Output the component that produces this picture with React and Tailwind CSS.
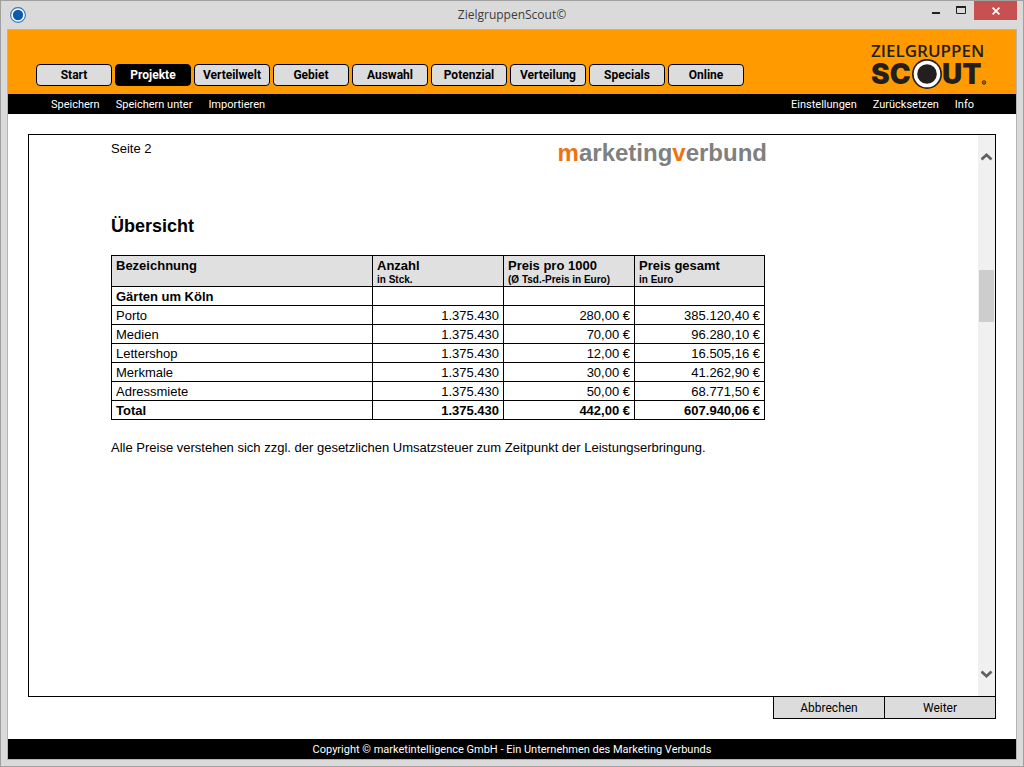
const tabs = [
  'Start',
  'Projekte',
  'Verteilwelt',
  'Gebiet',
  'Auswahl',
  'Potenzial',
  'Verteilung',
  'Specials',
  'Online',
];

const rows = [
  ['Porto', '1.375.430', '280,00 €', '385.120,40 €'],
  ['Medien', '1.375.430', '70,00 €', '96.280,10 €'],
  ['Lettershop', '1.375.430', '12,00 €', '16.505,16 €'],
  ['Merkmale', '1.375.430', '30,00 €', '41.262,90 €'],
  ['Adressmiete', '1.375.430', '50,00 €', '68.771,50 €'],
];

const columns = [
  ['Bezeichnung', ''],
  ['Anzahl', 'in Stck.'],
  ['Preis pro 1000', '(Ø Tsd.-Preis in Euro)'],
  ['Preis gesamt', 'in Euro'],
];

function TitleBar() {
  return (
    <header className="grid h-7 grid-cols-[1fr_auto_1fr] items-start">
      <svg className="mt-1 ml-2 size-5" viewBox="0 0 20 20" aria-hidden="true">
        <circle cx="9" cy="10" r="7.4" fill="#fff" stroke="#2f74b8" strokeWidth="1.1" />
        <circle cx="9" cy="10" r="5.2" fill="#0b5cad" />
      </svg>
      <h1 className="pt-1 font-['Open_Sans',sans-serif] text-xs leading-5 text-[#3c3c3c]">
        ZielgruppenScout©
      </h1>
      <div className="flex justify-end pr-1.5">
        <button type="button" aria-label="Minimieren" className="flex h-5 w-6 justify-center">
          <svg className="h-5 w-4" viewBox="0 0 16 20">
            <rect x="6" y="11" width="8" height="2" fill="#222" />
          </svg>
        </button>
        <button type="button" aria-label="Maximieren" className="flex h-5 w-7 justify-center">
          <svg className="h-5 w-4" viewBox="0 0 16 20">
            <path d="M4.500 12.500V6h9v6.500z" fill="none" stroke="#222" />
            <path d="M4 6h10" stroke="#222" strokeWidth="2" />
          </svg>
        </button>
        <button
          type="button"
          aria-label="Schließen"
          className="flex h-[19px] w-[43px] items-center justify-center bg-[#c75050]"
        >
          <svg className="size-2" viewBox="0 0 8 8">
            <path d="M.6.6l6.800 6.800M7.400.6L.6 7.400" stroke="#fff" strokeWidth="1.700" />
          </svg>
        </button>
      </div>
    </header>
  );
}

function Logo() {
  return (
    <svg className="h-[50px] w-[118px] overflow-visible" viewBox="0 0 118 50" role="img" aria-label="Zielgruppen Scout">
      <g fill="#231f20">
        <text x="2" y="17" className="font-['Open_Sans',sans-serif] text-[17px] font-semibold">
          ZIELGRUPPEN
        </text>
        <text x="2" y="44" className="font-[Inter,sans-serif] text-[28px] font-black">
          SC
        </text>
        <text x="73" y="44" className="font-[Inter,sans-serif] text-[28px] font-black">
          UT
        </text>
        <circle cx="58" cy="34" r="15" />
        <circle cx="58" cy="34" r="13.300" fill="#fff" />
        <circle cx="58" cy="34" r="9.800" />
      </g>
      <circle cx="115" cy="42.500" r="1.700" fill="none" stroke="#231f20" strokeWidth="1" />
      <circle cx="115" cy="42.500" r=".6" fill="#231f20" />
    </svg>
  );
}

function MenuLink({ children }) {
  return (
    <a href="#" className="hover:underline">
      {children}
    </a>
  );
}

function ScrollBar() {
  return (
    <div className="flex w-[17px] shrink-0 flex-col bg-[#f0f0f0] pt-3 pb-3">
      <button type="button" aria-label="Nach oben" className="flex h-5 items-center justify-center">
        <svg className="h-2.5 w-3" viewBox="0 0 12 10">
          <path d="M.5 7.500L5.500 2.800l5 4.700" fill="none" stroke="#606060" strokeWidth="2.800" />
        </svg>
      </button>
      <div className="flex grow flex-col px-px">
        <div className="basis-[103px]" />
        <div className="h-[52px] bg-[#cdcdcd]" />
      </div>
      <button type="button" aria-label="Nach unten" className="flex h-5 items-center justify-center">
        <svg className="h-2.5 w-3" viewBox="0 0 12 10">
          <path d="M.5 2.500l5 4.700 5-4.700" fill="none" stroke="#606060" strokeWidth="2.800" />
        </svg>
      </button>
    </div>
  );
}

function PriceTable() {
  return (
    <table className="w-full table-fixed border-collapse text-[13px] leading-[17px] [&_td]:border [&_td]:border-black [&_td]:px-1 [&_td]:pt-px [&_th]:border [&_th]:border-black [&_th]:px-1 [&_th]:pt-px">
      <colgroup>
        <col />
        <col className="w-[131px]" />
        <col className="w-[131px]" />
        <col className="w-[130px]" />
      </colgroup>
      <thead>
        <tr className="h-[31px] bg-[#e0e0e0] text-left">
          {columns.map(([title, unit]) => (
            <th key={title} scope="col" className="align-top">
              <span className="block pt-px leading-4">{title}</span>
              <span className="block text-[10px] leading-3">{unit}</span>
            </th>
          ))}
        </tr>
      </thead>
      <tbody>
        <tr>
          <th scope="row" className="text-left">
            Gärten um Köln
          </th>
          <td />
          <td />
          <td />
        </tr>
        {rows.map(([name, ...values]) => (
          <tr key={name}>
            <td>{name}</td>
            {values.map((value, i) => (
              <td key={i} className="text-right">
                {value}
              </td>
            ))}
          </tr>
        ))}
        <tr className="text-right font-bold">
          <th scope="row" className="text-left">
            Total
          </th>
          <td>1.375.430</td>
          <td>442,00 €</td>
          <td>607.940,06 €</td>
        </tr>
      </tbody>
    </table>
  );
}

export default function App() {
  return (
    <div className="flex min-h-screen flex-col border border-[#a0a0a0] bg-[#dadada] font-['Liberation_Sans',Arial,sans-serif] text-black">
      <TitleBar />
      <div className="mx-1.5 mb-1.5 flex grow flex-col border border-[#b4b4b4] bg-white">
        <div className="flex items-end justify-between bg-[#ff9b00] pt-2.5 pr-[29px] pb-1 pl-7">
          <nav className="flex gap-[3px] pb-1">
            {tabs.map((tab) => (
              <button
                key={tab}
                type="button"
                className={
                  tab === 'Projekte'
                    ? 'h-[22px] w-[76px] rounded border border-black bg-black font-[Roboto,sans-serif] text-xs font-bold text-white'
                    : 'h-[22px] w-[76px] rounded border border-black bg-[#dcdcdc] font-[Roboto,sans-serif] text-xs font-bold'
                }
              >
                {tab}
              </button>
            ))}
          </nav>
          <Logo />
        </div>
        <nav className="flex h-5 items-center justify-between bg-black pt-0.5 pr-[42px] pl-[43px] font-[Roboto,sans-serif] text-[11px] text-white">
          <div className="flex gap-4">
            <MenuLink>Speichern</MenuLink>
            <MenuLink>Speichern unter</MenuLink>
            <MenuLink>Importieren</MenuLink>
          </div>
          <div className="flex gap-4">
            <MenuLink>Einstellungen</MenuLink>
            <MenuLink>Zurücksetzen</MenuLink>
            <MenuLink>Info</MenuLink>
          </div>
        </nav>
        <main className="flex grow flex-col px-5 py-5">
          <section className="flex grow border border-black">
            <article className="grow pt-1 pl-[82px]">
              <div className="max-w-[656px]">
                <div className="flex items-start justify-between">
                  <p className="text-[13px] leading-5">Seite 2</p>
                  <p className="text-2xl leading-7 font-bold text-[#808080]">
                    <span className="text-[#ee7310]">m</span>arketing
                    <span className="text-[#ee7310]">v</span>erbund
                  </p>
                </div>
                <h2 className="mt-[47px] mb-[17px] text-lg leading-6 font-bold">Übersicht</h2>
                <div className="pr-0.5">
                  <PriceTable />
                </div>
                <p className="mt-[18px] text-[13px] leading-5">
                  Alle Preise verstehen sich zzgl. der gesetzlichen Umsatzsteuer zum Zeitpunkt der
                  Leistungserbringung.
                </p>
              </div>
            </article>
            <ScrollBar />
          </section>
          <div className="flex justify-end font-[Roboto,sans-serif] text-xs">
            <button type="button" className="h-[22px] w-[111px] border-b border-l border-black bg-[#dcdcdc]">
              Abbrechen
            </button>
            <button type="button" className="h-[22px] w-28 border-x border-b border-black bg-[#dcdcdc]">
              Weiter
            </button>
          </div>
        </main>
        <footer className="bg-black pt-0.5 text-center font-[Roboto,sans-serif] text-[11px] leading-[18px] text-white">
          Copyright © marketintelligence GmbH - Ein Unternehmen des Marketing Verbunds
        </footer>
      </div>
    </div>
  );
}
